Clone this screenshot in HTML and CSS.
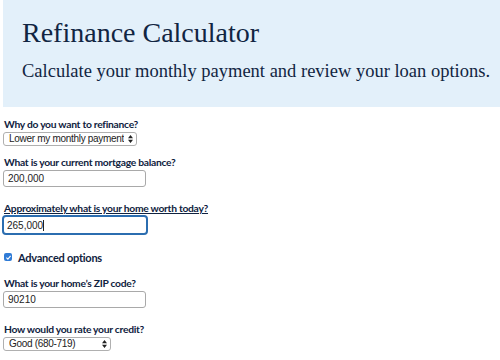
FILE: index.html
```html
<!DOCTYPE html>
<html lang="en">
<head>
<meta charset="utf-8">
<title>Refinance Calculator</title>
<link rel="stylesheet" href="styles.css">
</head>
<body>
<header class="hero">
  <h1 class="hero-title">Refinance Calculator</h1>
  <p class="hero-sub">Calculate your monthly payment and review your loan options.</p>
</header>
<form class="calc">
  <div class="field field-select">
    <label class="label" for="why">Why do you want to refinance?</label>
    <span class="select-wrap select-wide">
      <select id="why" class="select"><option>Lower my monthly payment</option></select>
      <svg class="arrows" width="5" height="8" viewBox="0 0 5 8"><path d="M0 3.2 L2.5 0 L5 3.2 Z M0 4.8 L2.5 8 L5 4.8 Z" fill="#222"/></svg>
    </span>
  </div>
  <div class="field">
    <label class="label" for="bal">What is your current mortgage balance?</label>
    <input id="bal" class="text" type="text" value="200,000">
  </div>
  <div class="field field-focus">
    <label class="label label-u" for="worth">Approximately what is your home worth today?</label>
    <span class="focus-wrap">
      <input id="worth" class="text text-focus" type="text" value="265,000">
      <span class="caret"></span>
    </span>
  </div>
  <div class="check-row">
    <span class="check"><svg width="7" height="7" viewBox="0 0 7 7"><path d="M1.4 3.6 L2.9 5.1 L5.6 1.8" fill="none" stroke="#fff" stroke-width="1.1"/></svg></span>
    <span class="check-label">Advanced options</span>
  </div>
  <div class="field">
    <label class="label" for="zip">What is your home’s ZIP code?</label>
    <input id="zip" class="text" type="text" value="90210">
  </div>
  <div class="field field-select">
    <label class="label" for="credit">How would you rate your credit?</label>
    <span class="select-wrap select-narrow">
      <select id="credit" class="select"><option>Good (680-719)</option></select>
      <svg class="arrows" width="5" height="8" viewBox="0 0 5 8"><path d="M0 3.2 L2.5 0 L5 3.2 Z M0 4.8 L2.5 8 L5 4.8 Z" fill="#222"/></svg>
    </span>
  </div>
</form>
</body>
</html>
```
FILE: styles.css
```css
* { box-sizing: border-box; }
html, body { margin: 0; padding: 0; background: #fff; }
body { font-family: "Liberation Sans", Arial, sans-serif; color: #0f2240; width: 500px; height: 360px; overflow: hidden; }

.hero {
  margin-left: 3px;
  height: 107px;
  background: #e3f0fa;
  padding: 18px 0 0 19px;
  color: #112542;
}
.hero-title {
  margin: 0;
  font-family: "Liberation Serif", "Times New Roman", serif;
  font-weight: normal;
  font-size: 28px;
  line-height: 30px;
}
.hero-sub {
  margin: 11px 0 0;
  font-family: "Liberation Serif", "Times New Roman", serif;
  font-size: 18.5px;
  line-height: 24px;
  white-space: nowrap;
}

.calc { padding: 10px 0 0 4px; }
.field { display: flex; flex-direction: column; align-items: flex-start; margin-bottom: 14px; }
.field-select { margin-bottom: 9px; }
.label {
  font-family: Lato, "Liberation Sans", sans-serif;
  font-weight: bold;
  font-size: 10.3px;
  letter-spacing: -0.28px;
  line-height: 14px;
  color: #0f2240;
  margin-bottom: 1px;
}
.label-u { text-decoration: underline; }
.field-focus .label { margin-bottom: 0; }

.text {
  margin-left: -1px;
  width: 143px;
  height: 17px;
  border: 1px solid #a9a9a9;
  border-radius: 3px;
  padding: 0 4px;
  font-family: "Liberation Sans", Arial, sans-serif;
  font-size: 10px;
  color: #222;
  background: #fff;
  outline: none;
}
.focus-wrap { position: relative; display: block; margin-left: -2px; }
.text-focus {
  margin-left: 0;
  width: 146px;
  height: 20px;
  border: 2px solid #2b6db0;
  border-radius: 4px;
  padding: 0 3px;
  display: block;
}
.caret { position: absolute; left: 41px; top: 5px; width: 1px; height: 11px; background: #222; }

.select-wrap { position: relative; display: inline-block; margin-left: -1px; }
.select {
  -webkit-appearance: none;
  appearance: none;
  height: 14px;
  border: 1px solid #b0b0b0;
  border-radius: 3px;
  background: #fff;
  font-family: "Liberation Sans", Arial, sans-serif;
  font-size: 10px;
  letter-spacing: -0.3px;
  line-height: 12px;
  color: #222;
  padding: 0 12px 0 5px;
  display: block;
}
.select-wide .select { width: 134px; }
.select-narrow .select { width: 108px; }
.arrows { position: absolute; right: 4px; top: 3px; }

.check-row { display: flex; align-items: center; gap: 6px; margin: 15px 0 12px; height: 14px; }
.check {
  width: 8px; height: 8px; border-radius: 2px; background: #2f7bd6;
  display: flex; align-items: center; justify-content: center;
}
.check svg { display: block; }
.check-label { font-family: Lato, "Liberation Sans", sans-serif; font-weight: bold; font-size: 11px; letter-spacing: -0.25px; color: #0f2240; }
```
